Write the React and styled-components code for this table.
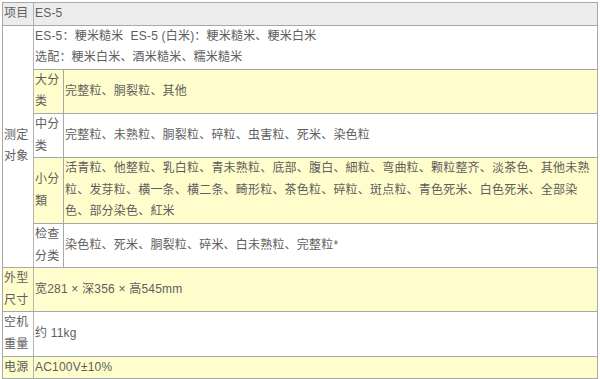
import styled, { createGlobalStyle } from 'styled-components';

const GlobalStyle = createGlobalStyle`
  body {
    margin: 0;
    background: #fff;
    font-family: "Liberation Sans", "Noto Sans CJK SC", sans-serif;
    font-size: 12px;
    line-height: 1.8;
    color: #5e5e5e;
    letter-spacing: 0.2px;
  }
`;

const subRows = [
  { label: '大分类', text: '完整粒、胴裂粒、其他', tint: true },
  { label: '中分类', text: '完整粒、未熟粒、胴裂粒、碎粒、虫害粒、死米、染色粒' },
  {
    label: '小分類',
    text: '活青粒、他整粒、乳白粒、青未熟粒、底部、腹白、細粒、弯曲粒、颗粒整齐、淡茶色、其他未熟粒、发芽粒、横一条、横二条、畸形粒、茶色粒、碎粒、斑点粒、青色死米、白色死米、全部染色、部分染色、紅米',
    tint: true,
  },
  { label: '检查分类', text: '染色粒、死米、胴裂粒、碎米、白未熟粒、完整粒*' },
];

const App = () => {
  return (
    <Page>
      <GlobalStyle />
      <Spec>
        <Row $bg="#ececec">
          <Label>项目</Label>
          <Value>ES-5</Value>
        </Row>
        <Row>
          <Label>测定对象</Label>
          <Stack>
            <Line>ES-5：粳米糙米&nbsp; ES-5 (白米)：粳米糙米、粳米白米</Line>
            <Line>选配：粳米白米、酒米糙米、糯米糙米</Line>
            <SubTable>
              {subRows.map((r) => (
                <SubRow key={r.label} $bg={r.tint ? '#fffdcb' : '#fff'}>
                  <SubLabel>{r.label}</SubLabel>
                  <Value>{r.text}</Value>
                </SubRow>
              ))}
            </SubTable>
          </Stack>
        </Row>
        <Row $bg="#fffdcb">
          <Label>外型尺寸</Label>
          <Value>宽281 × 深356 × 高545mm</Value>
        </Row>
        <Row>
          <Label>空机重量</Label>
          <Value>约 11kg</Value>
        </Row>
        <Row $bg="#fffdcb">
          <Label>电源</Label>
          <Value>AC100V±10%</Value>
        </Row>
      </Spec>
    </Page>
  );
};

export default App;

const Page = styled.div`
  padding: 2px 2px 0 2px;
`;

const Spec = styled.div`
  width: 596px;
  box-sizing: border-box;
  border: 1px solid #a8a8a8;
`;

const Row = styled.div`
  display: flex;
  background: ${(p) => p.$bg || '#fff'};

  & + & {
    border-top: 1px solid #a8a8a8;
  }
`;

const Label = styled.div`
  width: 31px;
  flex-shrink: 0;
  box-sizing: border-box;
  padding-left: 1px;
  border-right: 1px solid #b4b4b4;
  display: flex;
  align-items: center;
`;

const Value = styled.div`
  flex: 1;
  min-width: 0;
  padding-left: 1px;
  display: flex;
  align-items: center;
`;

const Stack = styled.div`
  flex: 1;
  min-width: 0;
  display: flex;
  flex-direction: column;
`;

const Line = styled.div`
  padding-left: 1px;
`;

const SubTable = styled.div`
  border-top: 1px solid #a8a8a8;
`;

const SubRow = styled.div`
  display: flex;
  background: ${(p) => p.$bg};

  & + & {
    border-top: 1px solid #a8a8a8;
  }
`;

const SubLabel = styled.div`
  width: 30px;
  flex-shrink: 0;
  box-sizing: border-box;
  padding-left: 1px;
  border-right: 1px solid #a8a8a8;
  display: flex;
  align-items: center;
`;
